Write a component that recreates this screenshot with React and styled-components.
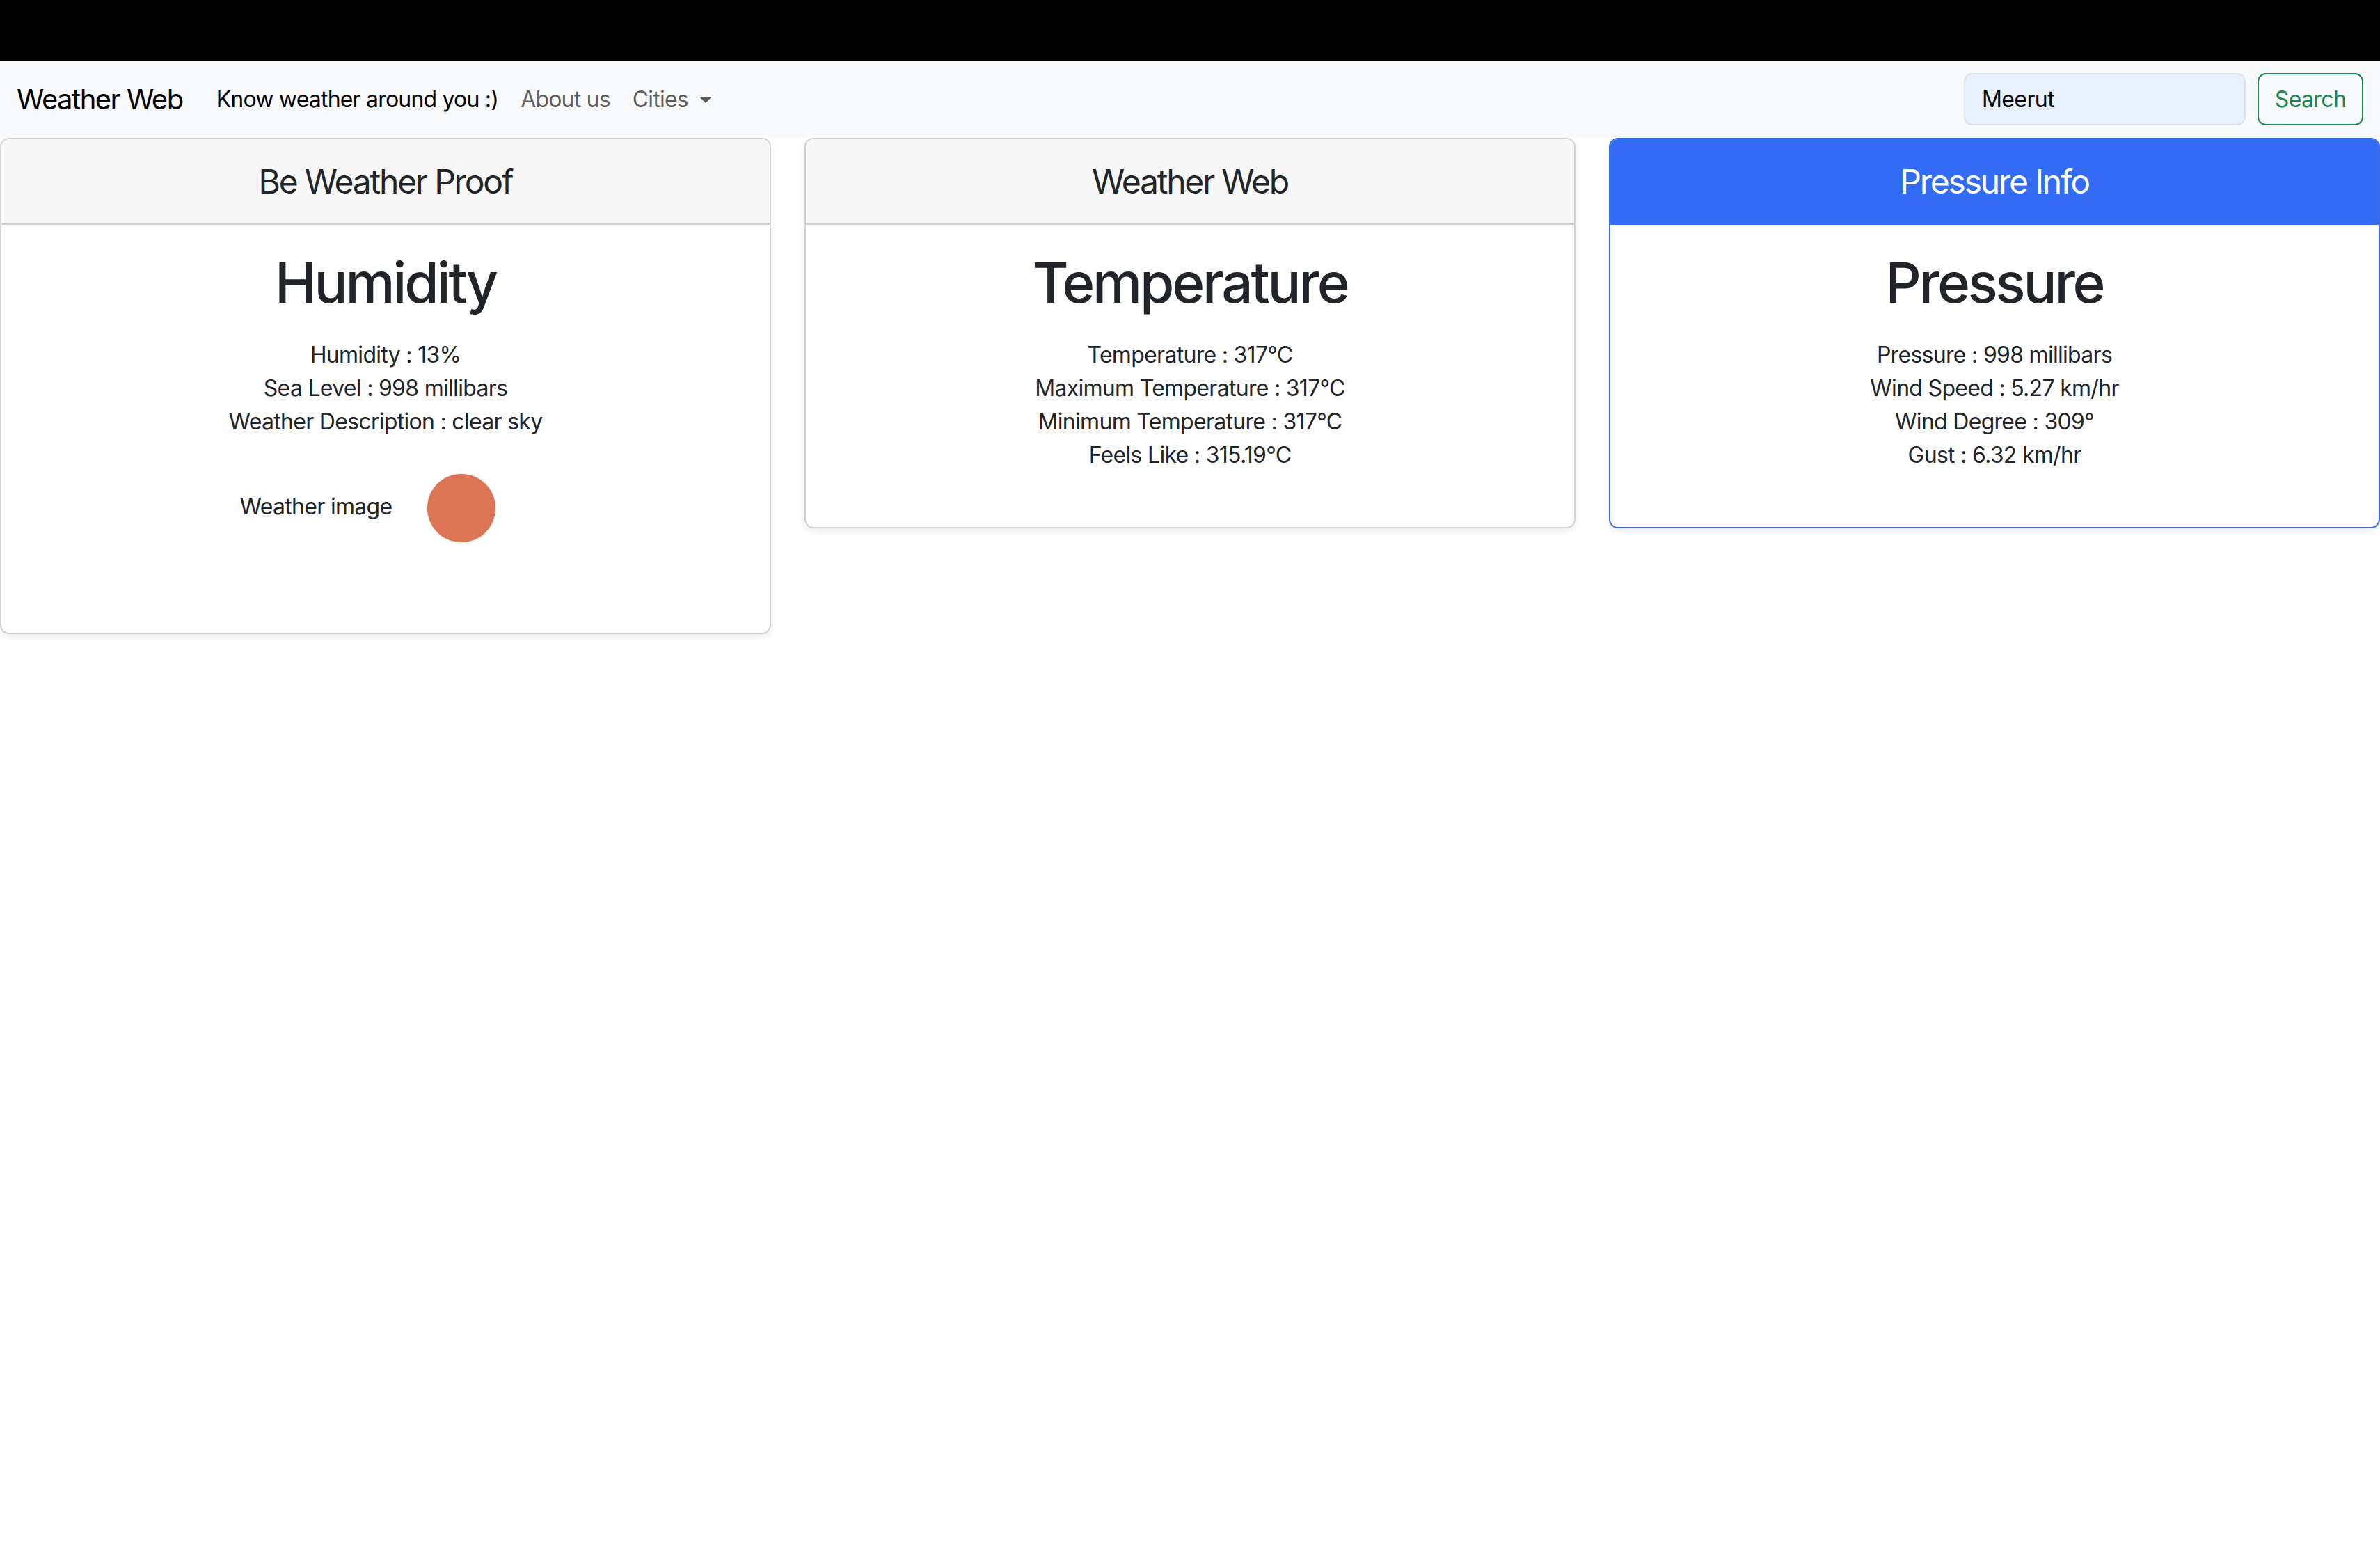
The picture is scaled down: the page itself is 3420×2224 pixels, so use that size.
import React from "react";
import styled, { createGlobalStyle } from "styled-components";

const GlobalStyle = createGlobalStyle`
  html, body {
    margin: 0;
    padding: 0;
    background: #ffffff;
  }
  body {
    font-family: Inter, "Noto Sans", "Liberation Sans", sans-serif;
    color: #212529;
    -webkit-font-smoothing: antialiased;
  }
  * { box-sizing: border-box; }
`;

const Page = styled.div`
  min-height: 2224px;
  background: #ffffff;
`;

const TopStrip = styled.div`
  height: 87px;
  background: #000000;
`;

const NavBar = styled.nav`
  height: 111px;
  background: #f8f9fa;
  display: flex;
  align-items: center;
  padding: 0 24px;
`;

const Brand = styled.a`
  font-size: 40px;
  color: #000000;
  margin-right: 32px;
  text-decoration: none;
  letter-spacing: -1.5px;
`;

const NavList = styled.ul`
  display: flex;
  align-items: center;
  list-style: none;
  margin: 0;
  padding: 0;
  flex: 1;
`;

const NavLink = styled.a`
  display: flex;
  align-items: center;
  padding: 0 16px;
  font-size: 32px;
  letter-spacing: -0.8px;
  text-decoration: none;
  color: ${(p) => (p.$active ? "#000000" : "rgba(0, 0, 0, 0.65)")};
`;

const Caret = styled.span`
  display: inline-block;
  margin-left: 16px;
  width: 0;
  height: 0;
  border-left: 9px solid transparent;
  border-right: 9px solid transparent;
  border-top: 9px solid rgba(0, 0, 0, 0.65);
  margin-top: 2px;
`;

const SearchForm = styled.form`
  display: flex;
  align-items: center;
  gap: 17px;
`;

const SearchInput = styled.input`
  width: 405px;
  height: 75px;
  padding: 0 24px;
  font-family: inherit;
  font-size: 32px;
  letter-spacing: -0.6px;
  color: #000000;
  background: #e8f0fe;
  border: 2px solid #dee2e6;
  border-radius: 12px;
  outline: none;
`;

const SearchButton = styled.button`
  width: 152px;
  height: 75px;
  padding: 0;
  font-family: inherit;
  font-size: 32px;
  letter-spacing: -0.6px;
  color: #198754;
  background: transparent;
  border: 2px solid #198754;
  border-radius: 12px;
`;

const CardRow = styled.div`
  display: grid;
  grid-template-columns: repeat(3, 1fr);
  gap: 48px;
  align-items: start;
`;

const Card = styled.div`
  border: 2px solid ${(p) => (p.$primary ? "#3a6fdc" : "rgba(0, 0, 0, 0.175)")};
  border-radius: 13px;
  background: #ffffff;
  box-shadow: 0 4px 8px rgba(0, 0, 0, 0.075);
  overflow: hidden;
`;

const CardHeader = styled.div`
  height: 123px;
  display: flex;
  align-items: center;
  justify-content: center;
  font-size: 48px;
  letter-spacing: -2.2px;
  background: ${(p) => (p.$primary ? "#336cf4" : "#f7f7f7")};
  color: ${(p) => (p.$primary ? "#ffffff" : "#212529")};
  border-bottom: 2px solid ${(p) => (p.$primary ? "#336cf4" : "rgba(0, 0, 0, 0.175)")};
`;

const CardBody = styled.div`
  padding: 35px 32px 79px;
  text-align: center;
`;

const Title = styled.h1`
  margin: 0 0 32px;
  font-size: 80px;
  font-weight: 500;
  line-height: 1.2;
  letter-spacing: -3.2px;
`;

const Line = styled.div`
  font-size: 32px;
  line-height: 48px;
  letter-spacing: -0.7px;
`;

const ImageLine = styled.div`
  font-size: 32px;
  line-height: 48px;
  letter-spacing: -0.7px;
`;

const WeatherIcon = styled.span`
  display: inline-block;
  vertical-align: middle;
  width: 200px;
  height: 200px;
  position: relative;
  &::after {
    content: "";
    position: absolute;
    left: 51px;
    top: 51px;
    width: 98px;
    height: 98px;
    border-radius: 50%;
    background: #dc7555;
    box-shadow: 0 0 2px rgba(220, 117, 85, 0.5);
  }
`;

const cards = [
  {
    header: "Be Weather Proof",
    title: "Humidity",
    lines: [
      "Humidity : 13%",
      "Sea Level : 998 millibars",
      "Weather Description : clear sky",
    ],
    image: true,
  },
  {
    header: "Weather Web",
    title: "Temperature",
    lines: [
      "Temperature : 317°C",
      "Maximum Temperature : 317°C",
      "Minimum Temperature : 317°C",
      "Feels Like : 315.19°C",
    ],
  },
  {
    header: "Pressure Info",
    title: "Pressure",
    primary: true,
    lines: [
      "Pressure : 998 millibars",
      "Wind Speed : 5.27 km/hr",
      "Wind Degree : 309°",
      "Gust : 6.32 km/hr",
    ],
  },
];

export default function App() {
  return (
    <Page>
      <GlobalStyle />
      <TopStrip />
      <NavBar>
        <Brand href="#">Weather Web</Brand>
        <NavList>
          <li>
            <NavLink $active href="#">Know weather around you :)</NavLink>
          </li>
          <li>
            <NavLink href="#">About us</NavLink>
          </li>
          <li>
            <NavLink href="#">
              Cities
              <Caret />
            </NavLink>
          </li>
        </NavList>
        <SearchForm onSubmit={(e) => e.preventDefault()}>
          <SearchInput type="search" defaultValue="Meerut" aria-label="Search" />
          <SearchButton type="submit">Search</SearchButton>
        </SearchForm>
      </NavBar>
      <CardRow>
        {cards.map((c) => (
          <Card key={c.title} $primary={c.primary}>
            <CardHeader $primary={c.primary}>{c.header}</CardHeader>
            <CardBody>
              <Title>{c.title}</Title>
              {c.lines.map((l) => (
                <Line key={l}>{l}</Line>
              ))}
              {c.image && (
                <ImageLine>
                  Weather image
                  <WeatherIcon role="img" aria-label="Weather image" />
                </ImageLine>
              )}
            </CardBody>
          </Card>
        ))}
      </CardRow>
    </Page>
  );
}
